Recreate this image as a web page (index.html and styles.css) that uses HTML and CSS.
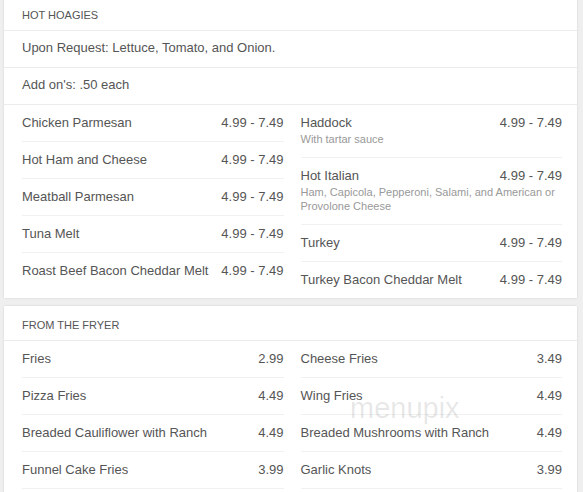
FILE: index.html
```html
<!doctype html>
<html lang="en">
<head>
  <meta charset="UTF-8">
  <meta name="viewport" content="width=device-width, initial-scale=1">
  <title>Menu</title>
  <link rel="stylesheet" href="styles.css">
</head>
<body>
<div class="menu">
  <section class="card">
    <h2 class="card-title">Hot Hoagies</h2>
    <div class="note">Upon Request: Lettuce, Tomato, and Onion.</div>
    <div class="note">Add on's: .50 each</div>
    <div class="columns">
      <div class="list">
        <div class="item"><div class="item-top"><span>Chicken Parmesan</span><span>4.99 - 7.49</span></div></div>
        <div class="item"><div class="item-top"><span>Hot Ham and Cheese</span><span>4.99 - 7.49</span></div></div>
        <div class="item"><div class="item-top"><span>Meatball Parmesan</span><span>4.99 - 7.49</span></div></div>
        <div class="item"><div class="item-top"><span>Tuna Melt</span><span>4.99 - 7.49</span></div></div>
        <div class="item"><div class="item-top"><span>Roast Beef Bacon Cheddar Melt</span><span>4.99 - 7.49</span></div></div>
      </div>
      <div class="list">
        <div class="item">
          <div class="item-top"><span>Haddock</span><span>4.99 - 7.49</span></div>
          <div class="item-desc">With tartar sauce</div>
        </div>
        <div class="item">
          <div class="item-top"><span>Hot Italian</span><span>4.99 - 7.49</span></div>
          <div class="item-desc">Ham, Capicola, Pepperoni, Salami, and American or Provolone Cheese</div>
        </div>
        <div class="item"><div class="item-top"><span>Turkey</span><span>4.99 - 7.49</span></div></div>
        <div class="item"><div class="item-top"><span>Turkey Bacon Cheddar Melt</span><span>4.99 - 7.49</span></div></div>
      </div>
    </div>
  </section>

  <section class="card card-open">
    <h2 class="card-title">From the Fryer</h2>
    <div class="columns">
      <div class="list">
        <div class="item"><div class="item-top"><span>Fries</span><span>2.99</span></div></div>
        <div class="item"><div class="item-top"><span>Pizza Fries</span><span>4.49</span></div></div>
        <div class="item"><div class="item-top"><span>Breaded Cauliflower with Ranch</span><span>4.49</span></div></div>
        <div class="item"><div class="item-top"><span>Funnel Cake Fries</span><span>3.99</span></div></div>
      </div>
      <div class="list">
        <div class="item"><div class="item-top"><span>Cheese Fries</span><span>3.49</span></div></div>
        <div class="item"><div class="item-top"><span>Wing Fries</span><span>4.49</span></div></div>
        <div class="item"><div class="item-top"><span>Breaded Mushrooms with Ranch</span><span>4.49</span></div></div>
        <div class="item"><div class="item-top"><span>Garlic Knots</span><span>3.99</span></div></div>
      </div>
    </div>
  </section>
</div>
<div class="watermark">menupix</div>
</body>
</html>
```

FILE: styles.css
```css
body {
  margin: 0;
  height: 492px;
  overflow: hidden;
  font-family: "Liberation Sans", Arial, sans-serif;
  background-color: #efefef;
  color: #555;
}
.menu {
  display: flex;
  flex-direction: column;
  gap: 8px;
  margin: -4px 6px 0 4px;
}
.card {
  background: white;
  box-shadow: 0 0 2px rgba(0, 0, 0, 0.12);
}
.card-open {
  padding-bottom: 9px;
}
.card-title {
  margin: 0;
  padding: 12px 18px 8px;
  font-size: 11px;
  line-height: 14px;
  font-weight: normal;
  text-transform: uppercase;
  border-bottom: 1px solid #ececec;
}
.note {
  padding: 9px 18px 12px;
  font-size: 13px;
  line-height: 15px;
  border-bottom: 1px solid #ececec;
}
.columns {
  display: grid;
  grid-template-columns: 1fr 1fr;
  gap: 17px;
  padding: 0 15px 0 18px;
  align-items: start;
}
.list {
  display: flex;
  flex-direction: column;
}
.item {
  padding: 10px 0 11px;
  border-bottom: 1px solid #f1f1f1;
}
.item:last-child {
  border-bottom: none;
}
.card-open .item:last-child {
  border-bottom: 1px solid #f1f1f1;
}
.item-top {
  display: flex;
  justify-content: space-between;
  gap: 10px;
  font-size: 13px;
  line-height: 15px;
}
.item-desc {
  margin-top: 2px;
  font-size: 11px;
  line-height: 14px;
  color: #999;
}
.watermark {
  position: absolute;
  left: 350px;
  top: 394px;
  font-size: 29px;
  line-height: 28px;
  color: rgba(0, 0, 0, 0.1);
  pointer-events: none;
}
```
